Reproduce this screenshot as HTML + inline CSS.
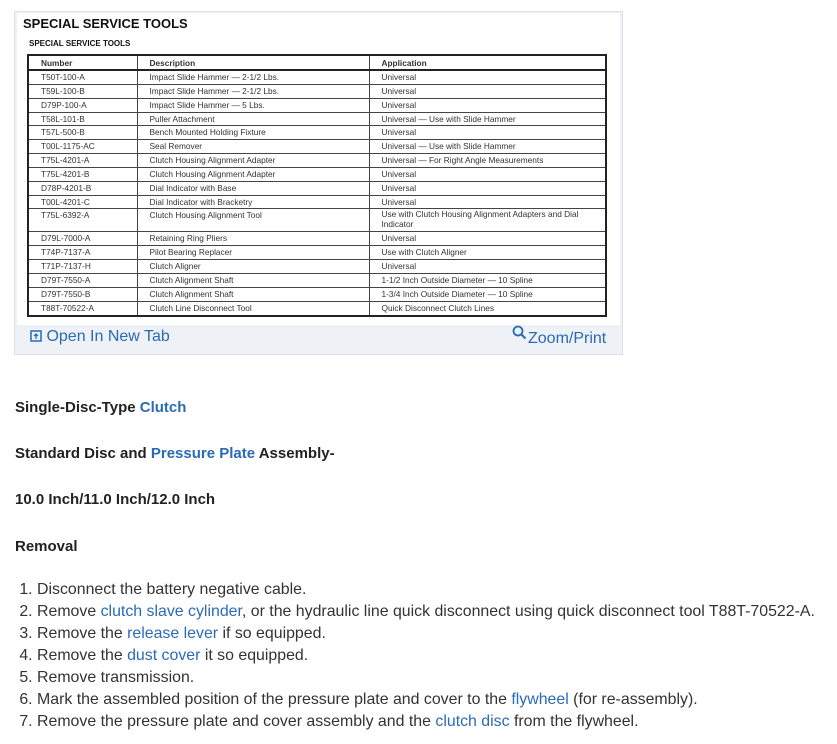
<!DOCTYPE html>
<html><head><meta charset="utf-8"><style>
body{margin:0;background:#fff;font-family:"Liberation Sans",sans-serif;color:#222;width:837px;height:744px;overflow:hidden;position:relative}
.box{position:absolute;left:14px;top:11px;width:607px;height:342px;background:#eef1f5;border:1px solid #dde2e8}
.img{position:absolute;left:2px;top:1px;width:603px;height:312px;background:#fff}
.t1{position:absolute;left:6px;top:3px;font-weight:bold;font-size:13px;color:#111}
.t2{position:absolute;left:12px;top:26px;font-weight:bold;font-size:8px;color:#111}
table{position:absolute;left:10px;top:41px;width:580px;border-collapse:collapse;border:2px solid #222;font-size:8.3px;color:#333}
td{border:1px solid #444;padding:0 0 0 12px;height:12.85px;line-height:12.5px;vertical-align:top}
th{border:1px solid #444;text-align:left;padding:0 0 0 12px;font-size:8.3px;height:13px;border-bottom:2px solid #222}
.links{position:absolute;top:316px;font-size:16px;color:#2a6bb5}
.h{position:absolute;left:15px;font-weight:bold;font-size:15px;color:#222}
a{color:#2a6bb5;text-decoration:none;font-weight:normal}
.h a{font-weight:bold}
ol{position:absolute;left:0;top:579px;margin:0;padding-left:37px;font-size:15.9px;line-height:22px;color:#333}
</style></head><body>
<div class="box"><div class="img">
<div class="t1">SPECIAL SERVICE TOOLS</div>
<div class="t2">SPECIAL SERVICE TOOLS</div>
<table>
<colgroup><col style="width:109px"><col style="width:232px"><col></colgroup>
<tr><th>Number</th><th>Description</th><th>Application</th></tr>
<tr><td>T50T-100-A</td><td>Impact Slide Hammer — 2-1/2 Lbs.</td><td>Universal</td></tr>
<tr><td>T59L-100-B</td><td>Impact Slide Hammer — 2-1/2 Lbs.</td><td>Universal</td></tr>
<tr><td>D79P-100-A</td><td>Impact Slide Hammer — 5 Lbs.</td><td>Universal</td></tr>
<tr><td>T58L-101-B</td><td>Puller Attachment</td><td>Universal — Use with Slide Hammer</td></tr>
<tr><td>T57L-500-B</td><td>Bench Mounted Holding Fixture</td><td>Universal</td></tr>
<tr><td>T00L-1175-AC</td><td>Seal Remover</td><td>Universal — Use with Slide Hammer</td></tr>
<tr><td>T75L-4201-A</td><td>Clutch Housing Alignment Adapter</td><td>Universal — For Right Angle Measurements</td></tr>
<tr><td>T75L-4201-B</td><td>Clutch Housing Alignment Adapter</td><td>Universal</td></tr>
<tr><td>D78P-4201-B</td><td>Dial Indicator with Base</td><td>Universal</td></tr>
<tr><td>T00L-4201-C</td><td>Dial Indicator with Bracketry</td><td>Universal</td></tr>
<tr><td style="height:22px">T75L-6392-A</td><td>Clutch Housing Alignment Tool</td><td style="line-height:10px">Use with Clutch Housing Alignment Adapters and Dial Indicator</td></tr>
<tr><td>D79L-7000-A</td><td>Retaining Ring Pliers</td><td>Universal</td></tr>
<tr><td>T74P-7137-A</td><td>Pilot Bearing Replacer</td><td>Use with Clutch Aligner</td></tr>
<tr><td>T71P-7137-H</td><td>Clutch Aligner</td><td>Universal</td></tr>
<tr><td>D79T-7550-A</td><td>Clutch Alignment Shaft</td><td>1-1/2 Inch Outside Diameter — 10 Spline</td></tr>
<tr><td>D79T-7550-B</td><td>Clutch Alignment Shaft</td><td>1-3/4 Inch Outside Diameter — 10 Spline</td></tr>
<tr><td>T88T-70522-A</td><td>Clutch Line Disconnect Tool</td><td>Quick Disconnect Clutch Lines</td></tr>
</table></div>
<div class="links" style="left:15px"><svg width="12" height="12" viewBox="0 0 12 12" style="vertical-align:-1px"><rect x="1" y="1" width="10" height="10" fill="none" stroke="#2a6bb5" stroke-width="1.5"/><path d="M6 9V4M4 6l2-2 2 2" stroke="#2a6bb5" stroke-width="1.3" fill="none"/></svg> Open In New Tab</div>
<div class="links" style="left:497px;top:313px"><svg width="16" height="16" viewBox="0 0 16 16" style="vertical-align:2px"><circle cx="6" cy="6" r="4.5" fill="none" stroke="#2a6bb5" stroke-width="1.8"/><path d="M9.5 9.5l4 4" stroke="#2a6bb5" stroke-width="2"/></svg>Zoom/Print</div>
</div>
<div class="h" style="top:399px">Single-Disc-Type <a>Clutch</a></div>
<div class="h" style="top:445px">Standard Disc and <a>Pressure Plate</a> Assembly-</div>
<div class="h" style="top:491px">10.0 Inch/11.0 Inch/12.0 Inch</div>
<div class="h" style="top:538px">Removal</div>
<ol>
<li>Disconnect the battery negative cable.</li>
<li>Remove <a>clutch slave cylinder</a>, or the hydraulic line quick disconnect using quick disconnect tool T88T-70522-A.</li>
<li>Remove the <a>release lever</a> if so equipped.</li>
<li>Remove the <a>dust cover</a> it so equipped.</li>
<li>Remove transmission.</li>
<li>Mark the assembled position of the pressure plate and cover to the <a>flywheel</a> (for re-assembly).</li>
<li>Remove the pressure plate and cover assembly and the <a>clutch disc</a> from the flywheel.</li>
</ol>
</body></html>
